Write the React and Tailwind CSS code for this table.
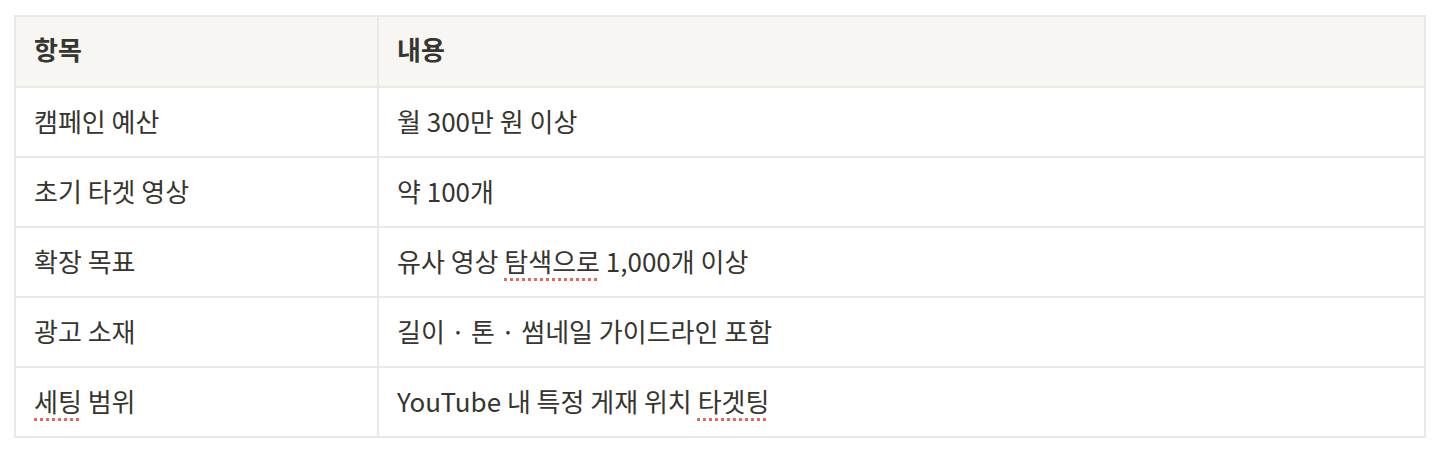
const rows = [
  { item: '캠페인 예산', value: <>월 300만 원 이상</> },
  { item: '초기 타겟 영상', value: <>약 100개</> },
  {
    item: '확장 목표',
    value: (
      <>
        유사 영상 <Squiggle>탐색으로</Squiggle> 1,000개 이상
      </>
    ),
  },
  { item: '광고 소재', value: <>길이 · 톤 · 썸네일 가이드라인 포함</> },
  {
    item: <><Squiggle>세팅</Squiggle> 범위</>,
    value: (
      <>
        YouTube 내 특정 게재 위치 <Squiggle>타겟팅</Squiggle>
      </>
    ),
  },
];

function Squiggle({ children }) {
  return (
    <span className="underline decoration-dotted decoration-[#e06b5b] decoration-[3px] underline-offset-[6px]">
      {children}
    </span>
  );
}

const App = () => {
  return (
    <div
      className="w-[1446px] h-[452px] bg-white pt-[15px] pl-[14px]"
      style={{ fontFamily: '"Noto Sans CJK KR", "Noto Sans", sans-serif' }}
    >
      <table className="w-[1412px] border-collapse border-2 border-[#e9e9e7] text-[26px] leading-none text-[#37352f]">
        <thead>
          <tr className="bg-[#f7f6f3] h-[71px]">
            <th className="w-[363px] text-left font-semibold pl-[18px] pr-5 pb-[5px] border-2 border-[#e9e9e7]">
              항목
            </th>
            <th className="text-left font-semibold pl-[18px] pr-5 pb-[5px] border-2 border-[#e9e9e7]">
              내용
            </th>
          </tr>
        </thead>
        <tbody>
          {rows.map((row, i) => (
            <tr key={i} className="h-[70px]">
              <td className="pl-[18px] pr-5 pb-[3px] border-2 border-[#e9e9e7]">
                {row.item}
              </td>
              <td className="pl-[18px] pr-5 pb-[3px] border-2 border-[#e9e9e7]">
                {row.value}
              </td>
            </tr>
          ))}
        </tbody>
      </table>
    </div>
  );
};

export default App;
